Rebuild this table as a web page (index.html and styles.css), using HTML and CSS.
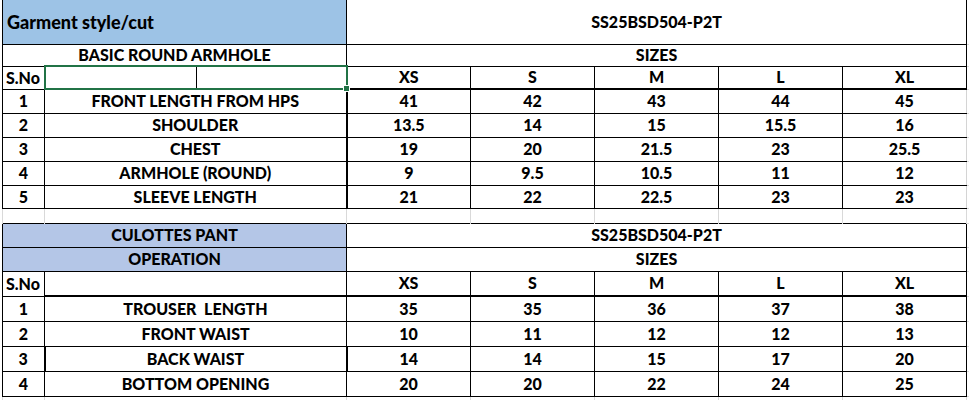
FILE: index.html
```html
<!DOCTYPE html>
<html>
<head>
<meta charset="utf-8">
<title>Size chart</title>
<link rel="stylesheet" href="styles.css">
</head>
<body>
<div class="sheet">
<table class="grid">
<colgroup>
<col class="c-a"><col class="c-b"><col class="c-c"><col class="c-s"><col class="c-s"><col class="c-s"><col class="c-s"><col class="c-s"><col class="c-x">
</colgroup>
<tbody>
<tr class="r-title">
<td colspan="3" class="blue1 title">Garment style/cut</td>
<td colspan="5" class="top-open">SS25BSD504-P2T</td>
<td class="x top-open"></td>
</tr>
<tr class="r-22">
<td colspan="3">BASIC ROUND ARMHOLE</td>
<td colspan="5">SIZES</td>
<td class="x"></td>
</tr>
<tr class="r-23 size-head">
<td class="sno">S.No</td>
<td class="sel sel-l"></td>
<td class="sel sel-r"><span class="handle"></span></td>
<td>XS</td><td>S</td><td>M</td><td>L</td><td>XL</td>
<td class="x"></td>
</tr>
<tr class="r-24 body-top"><td>1</td><td colspan="2" class="lbl">FRONT LENGTH FROM HPS</td><td>41</td><td>42</td><td>43</td><td>44</td><td class="last">45</td><td class="x"></td></tr>
<tr class="r-24 body-top"><td>2</td><td colspan="2" class="lbl">SHOULDER</td><td>13.5</td><td>14</td><td>15</td><td>15.5</td><td class="last">16</td><td class="x"></td></tr>
<tr class="r-24 body-top"><td>3</td><td colspan="2" class="lbl">CHEST</td><td>19</td><td>20</td><td>21.5</td><td>23</td><td class="last">25.5</td><td class="x"></td></tr>
<tr class="r-24 body-top"><td>4</td><td colspan="2" class="lbl">ARMHOLE (ROUND)</td><td>9</td><td>9.5</td><td>10.5</td><td>11</td><td class="last">12</td><td class="x"></td></tr>
<tr class="r-23b body-top"><td>5</td><td colspan="2" class="lbl">SLEEVE LENGTH</td><td>21</td><td>22</td><td>22.5</td><td>23</td><td class="last">23</td><td class="x"></td></tr>
<tr class="r-gap gap"><td></td><td colspan="2"></td><td></td><td></td><td></td><td></td><td></td><td class="x"></td></tr>
<tr class="r-24">
<td colspan="3" class="blue2">CULOTTES PANT</td>
<td colspan="5">SS25BSD504-P2T</td>
<td class="x"></td>
</tr>
<tr class="r-24">
<td colspan="3" class="blue2">OPERATION</td>
<td colspan="5">SIZES</td>
<td class="x"></td>
</tr>
<tr class="r-25 size-head">
<td class="sno">S.No</td>
<td colspan="2"></td>
<td>XS</td><td>S</td><td>M</td><td>L</td><td>XL</td>
<td class="x"></td>
</tr>
<tr class="r-25"><td>1</td><td colspan="2" class="lbl">TROUSER&nbsp; LENGTH</td><td>35</td><td>35</td><td>36</td><td>37</td><td>38</td><td class="x"></td></tr>
<tr class="r-25"><td>2</td><td colspan="2" class="lbl">FRONT WAIST</td><td>10</td><td>11</td><td>12</td><td>12</td><td>13</td><td class="x"></td></tr>
<tr class="r-25"><td>3</td><td colspan="2" class="lbl boxed">BACK WAIST</td><td>14</td><td>14</td><td>15</td><td>17</td><td>20</td><td class="x"></td></tr>
<tr class="r-25"><td>4</td><td colspan="2" class="lbl">BOTTOM OPENING</td><td>20</td><td>20</td><td>22</td><td>24</td><td>25</td><td class="x"></td></tr>
<tr class="r-gap gap"><td></td><td colspan="2"></td><td></td><td></td><td></td><td></td><td></td><td class="x"></td></tr>
</tbody>
</table>
</div>
</body>
</html>
```
FILE: styles.css
```css
html, body {
  margin: 0;
  padding: 0;
  background: #ffffff;
  overflow: hidden;
}

.sheet {
  padding-left: 2px;
}

.grid {
  border-collapse: collapse;
  table-layout: fixed;
  width: 972px;
  font-family: Lato, "Liberation Sans", sans-serif;
  font-weight: 900;
  font-size: 16px;
  color: #000;
}

.c-a { width: 42px; }
.c-b { width: 152px; }
.c-c { width: 150px; }
.c-s { width: 124px; }
.c-x { width: 8px; }

.grid td {
  border: 1px solid #000;
  padding: 0;
  text-align: center;
  vertical-align: middle;
  white-space: nowrap;
  overflow: visible;
  line-height: 1;
}

.r-title { height: 44px; }
.r-22 { height: 22px; }
.r-23 { height: 23px; }
.r-23b { height: 23px; }
.r-24 { height: 24px; }
.r-25 { height: 25px; }
.r-gap { height: 15px; }

.grid td.title {
  text-align: left;
  padding-left: 4px;
  font-size: 18px;
  border-top: none;
}

.grid td.top-open {
  border-top: none;
}

.blue1 { background: #9dc3e6; }
.blue2 { background: #b4c6e7; }

.grid td.sno {
  text-align: left;
  padding-left: 3px;
}

.size-head td {
  border-bottom-width: 2px;
}

.size-head td.sno {
  border-bottom-width: 1px;
}

.grid td.sel {
  border-top: 2px solid #217346;
  border-bottom: 2px solid #217346;
  position: relative;
}

.grid td.sel-l {
  border-left: 2px solid #217346;
}

.grid td.sel-r {
  border-right: 2px solid #217346;
}

.handle {
  position: absolute;
  right: -4px;
  bottom: -4px;
  width: 5px;
  height: 5px;
  background: #217346;
  border: 1px solid #fff;
}

.body-top td.lbl {
  border-right-width: 2px;
}

.grid td.last {
  border-right-color: #d4d4d4;
}

.grid td.boxed {
  border-left-width: 2px;
  border-right-width: 2px;
}

.gap td {
  border-top: none;
  border-bottom: none;
  border-left: 1px solid #d9d9d9;
  border-right: 1px solid #d9d9d9;
}

.grid td.x {
  border-left: none;
  border-right: none;
  border-top-color: #d9d9d9;
  border-bottom-color: #d9d9d9;
}

.size-head td.x {
  border-bottom-width: 1px;
}

.grid td.x.top-open {
  border-top: none;
}
```
